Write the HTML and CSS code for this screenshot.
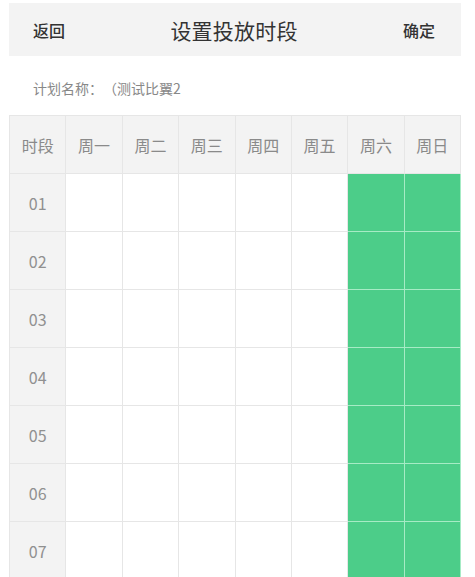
FILE: index.html
```html
<!DOCTYPE html>
<html lang="zh-CN">
<head>
<meta charset="utf-8">
<title>设置投放时段</title>
<link rel="stylesheet" href="styles.css">
</head>
<body>
<div class="page">
  <header class="topbar">
    <span class="nav-btn left">返回</span>
    <h1 class="title">设置投放时段</h1>
    <span class="nav-btn right">确定</span>
  </header>
  <p class="plan">计划名称：（测试比翼2</p>
  <div class="grid-wrap">
    <div class="grid">
      <div class="cell head">时段</div>
      <div class="cell head">周一</div>
      <div class="cell head">周二</div>
      <div class="cell head">周三</div>
      <div class="cell head">周四</div>
      <div class="cell head">周五</div>
      <div class="cell head">周六</div>
      <div class="cell head">周日</div>
    </div>
    <div class="grid body" id="rows"></div>
  </div>
</div>
<script src="app.js"></script>
</body>
</html>
```

FILE: app.js
```js
(function () {
  var rows = document.getElementById('rows');
  var html = '';
  for (var h = 1; h <= 7; h++) {
    var label = (h < 10 ? '0' : '') + h;
    html += '<div class="cell hour">' + label + '</div>';
    for (var d = 0; d < 7; d++) {
      html += '<div class="cell slot' + (d >= 5 ? ' on' : '') + '"></div>';
    }
  }
  rows.innerHTML = html;
})();
```

FILE: styles.css
```css
* { box-sizing: border-box; }

html, body {
  margin: 0;
  padding: 0;
  background: #fff;
}

body {
  font-family: "Noto Sans CJK SC", "Noto Sans", sans-serif;
  color: #333;
}

.page {
  height: 100vh;
  display: flex;
  flex-direction: column;
  padding: 3px 14px 0 9px;
  overflow: hidden;
}

.topbar {
  flex: none;
  height: 53px;
  background: #f3f3f3;
  display: grid;
  grid-template-columns: 1fr auto 1fr;
  align-items: center;
  padding: 0 26px 0 24px;
}

.nav-btn {
  font-size: 16px;
  font-weight: 500;
  color: #333;
}

.nav-btn.right { justify-self: end; }

.title {
  margin: 0;
  font-size: 21px;
  font-weight: 400;
  color: #333;
  letter-spacing: 0.2px;
}

.plan {
  flex: none;
  margin: 22px 0 17px;
  padding-left: 24px;
  height: 20px;
  line-height: 20px;
  font-size: 14px;
  color: #888;
  text-spacing-trim: space-all;
}

.grid-wrap {
  flex: 1;
  min-height: 0;
  display: flex;
  flex-direction: column;
  border-left: 1px solid #e6e6e6;
  border-top: 1px solid #e6e6e6;
}

.grid {
  display: grid;
  grid-template-columns: repeat(8, 1fr);
  grid-auto-rows: 58px;
}

.cell {
  border-right: 1px solid #e6e6e6;
  border-bottom: 1px solid #e6e6e6;
  display: flex;
  align-items: center;
  justify-content: center;
  font-size: 16px;
  color: #8a8a8a;
}

.cell.head {
  background: #f3f3f3;
  height: 58px;
}

.cell.hour {
  background: #f3f3f3;
  color: #909090;
}

.cell.slot { background: #fff; }

.cell.slot.on {
  background: #4ccd89;
  border-right-color: #a6ebc5;
  border-bottom-color: #a6ebc5;
}
```
